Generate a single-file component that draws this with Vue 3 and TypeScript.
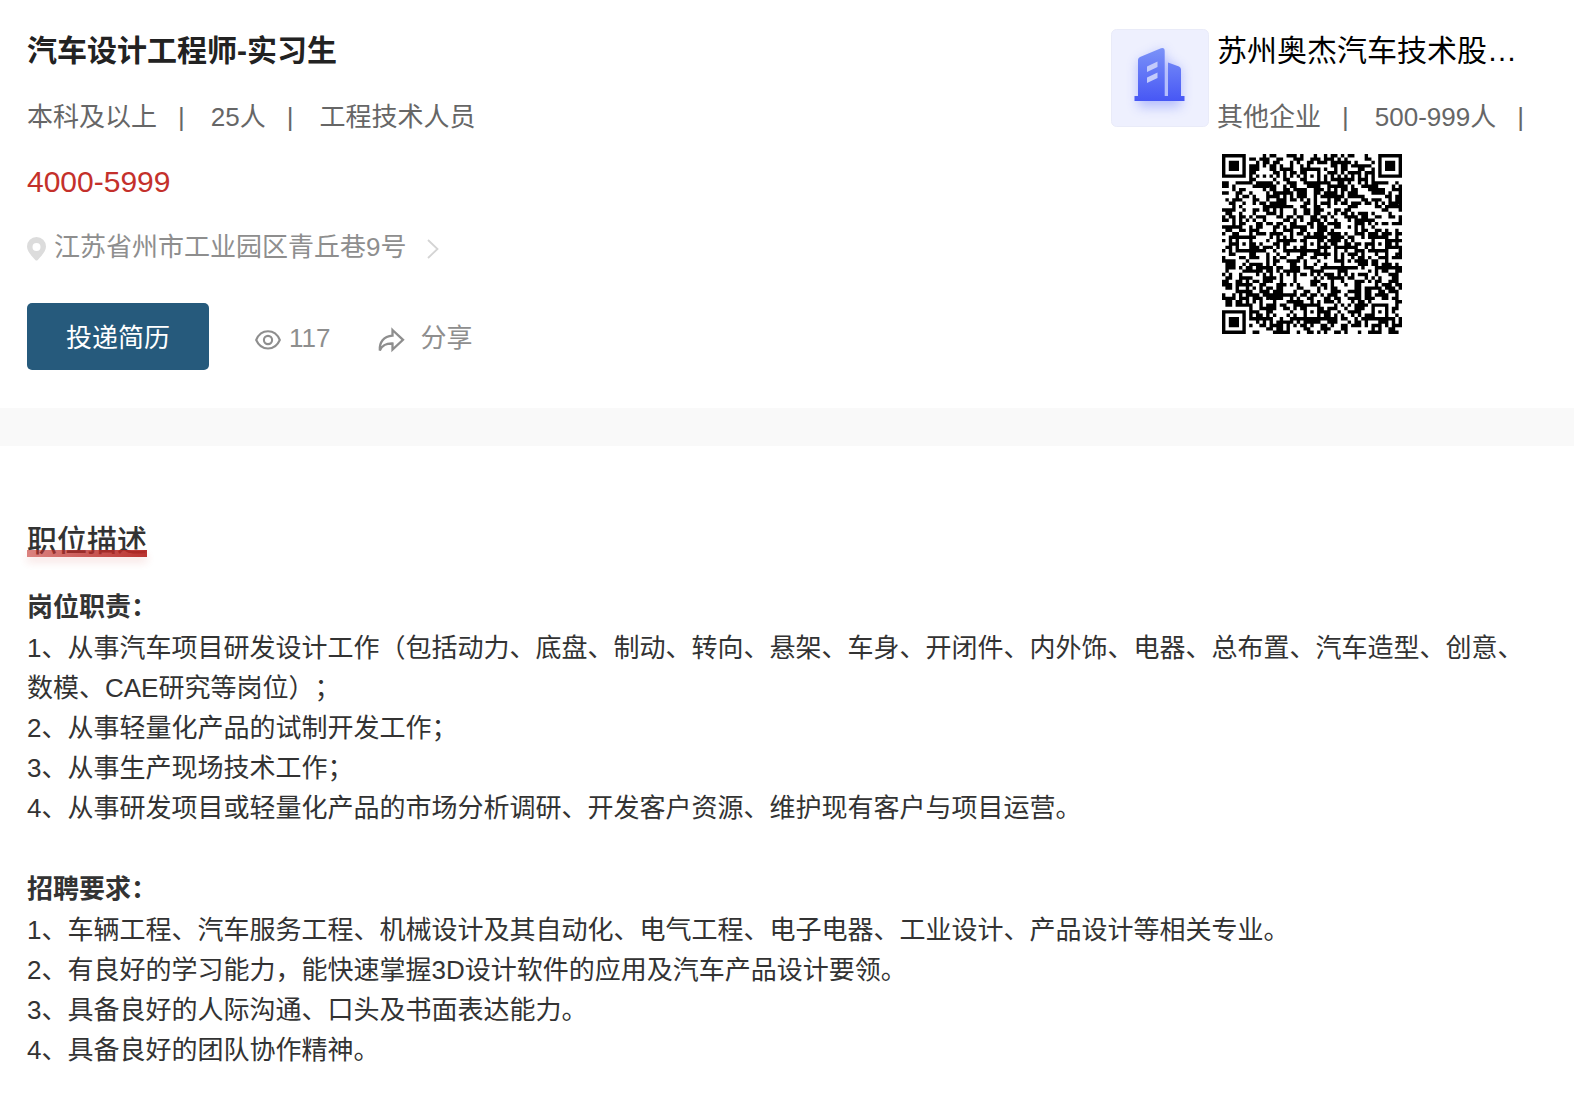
<script setup lang="ts">
interface Block {
  title: string
  items: string[]
}

const jobMeta: string[] = ['本科及以上', '25人', '工程技术人员']
const companyMeta: string[] = ['其他企业', '500-999人']

const blocks: Block[] = [
  {
    title: '岗位职责：',
    items: [
      '1、从事汽车项目研发设计工作（包括动力、底盘、制动、转向、悬架、车身、开闭件、内外饰、电器、总布置、汽车造型、创意、数模、CAE研究等岗位）；',
      '2、从事轻量化产品的试制开发工作；',
      '3、从事生产现场技术工作；',
      '4、从事研发项目或轻量化产品的市场分析调研、开发客户资源、维护现有客户与项目运营。',
    ],
  },
  {
    title: '招聘要求：',
    items: [
      '1、车辆工程、汽车服务工程、机械设计及其自动化、电气工程、电子电器、工业设计、产品设计等相关专业。',
      '2、有良好的学习能力，能快速掌握3D设计软件的应用及汽车产品设计要领。',
      '3、具备良好的人际沟通、口头及书面表达能力。',
      '4、具备良好的团队协作精神。',
    ],
  },
]

// Version 9 code: 53 modules per side
const QR_SIZE = 53
const ALIGN = [6, 26, 46]

function ring(dx: number, dy: number): number {
  return Math.max(Math.abs(dx), Math.abs(dy))
}

function buildQr(): string {
  let seed = 20239
  const next = (): number => {
    seed = (seed * 1103515245 + 12345) % 2147483648
    return seed / 2147483648
  }
  const last = QR_SIZE - 1
  let d = ''
  for (let y = 0; y < QR_SIZE; y++) {
    for (let x = 0; x < QR_SIZE; x++) {
      let dark = next() < 0.52
      if (x === 6 || y === 6) dark = (x + y) % 2 === 0
      for (const ay of ALIGN) {
        for (const ax of ALIGN) {
          const r = ring(x - ax, y - ay)
          if (r <= 2) dark = r !== 1
        }
      }
      for (const [fx, fy] of [[3, 3], [last - 3, 3], [3, last - 3]]) {
        const r = ring(x - fx, y - fy)
        if (r <= 4) dark = r !== 2 && r !== 4
      }
      if (dark) d += `M${x} ${y}h1v1h-1z`
    }
  }
  return d
}

const qrPath = buildQr()
</script>

<template>
  <main class="page">
    <header class="summary">
      <section class="job">
        <h1 class="job-title">汽车设计工程师-实习生</h1>
        <p class="meta">
          <template v-for="(m, i) in jobMeta" :key="m">
            <span>{{ m }}</span>
            <span v-if="i < jobMeta.length - 1" class="bar">|</span>
          </template>
        </p>
        <p class="salary">4000-5999</p>
        <a class="address" href="#map">
          <svg class="pin" viewBox="0 0 19 24" aria-hidden="true">
            <path fill="#dcdcdc" fill-rule="evenodd" d="M9.500 0A9.500 9.500 0 0 0 0 9.500C0 15 5.500 19.500 8.300 23Q9.500 24.200 10.700 23C13.500 19.500 19 15 19 9.500A9.500 9.500 0 0 0 9.500 0ZM9.500 6a4 4 0 1 1 0 8a4 4 0 0 1 0-8Z" />
          </svg>
          <span>江苏省州市工业园区青丘巷9号</span>
          <svg class="chevron" viewBox="0 0 12 20" aria-hidden="true">
            <path fill="none" stroke="#d4d4d4" stroke-width="1.800" d="M1 1l9.500 9L1 19" />
          </svg>
        </a>
        <div class="actions">
          <button class="apply" type="button">投递简历</button>
          <span class="views">
            <svg class="eye" viewBox="0 0 26 20" fill="none" stroke="#8e8e8e" stroke-width="2.100" aria-hidden="true">
              <path d="M1.200 10C3.500 4.500 7.800 1.300 13 1.300S22.500 4.500 24.800 10C22.500 15.300 18.200 18.500 13 18.500S3.500 15.300 1.200 10Z" />
              <circle cx="13" cy="10" r="4.100" />
            </svg>
            <span>117</span>
          </span>
          <button class="share" type="button">
            <svg class="share-icon" viewBox="0 0 27 26" fill="none" stroke="#8e8e8e" stroke-width="2.300" stroke-linejoin="miter" aria-hidden="true">
              <path d="M14.500 3L25 12.800L14.500 22.700V16.500C8.500 16.300 4.500 17.500 1.800 23.500C1.200 15.500 5.500 9.300 14.500 8.600Z" />
            </svg>
            <span>分享</span>
          </button>
        </div>
      </section>

      <aside class="company">
        <svg class="logo" viewBox="0 0 98 98" role="img" aria-label="企业">
          <defs>
            <linearGradient id="tower" x1="0" y1="0" x2="0" y2="1">
              <stop offset="0" stop-color="#7b92f8" />
              <stop offset="1" stop-color="#4757f5" />
            </linearGradient>
            <filter id="glow" x="-50%" y="-50%" width="200%" height="200%">
              <feGaussianBlur stdDeviation="6" />
            </filter>
          </defs>
          <rect x="0.500" y="0.500" width="97" height="97" rx="5" fill="#eef0fe" stroke="#e9ebf8" />
          <path d="M27 33L53 20V30L70 40V78H27Z" fill="#6f80fa" opacity="0.450" filter="url(#glow)" />
          <path fill="url(#tower)" d="M23.500 72V67H27V31Q27 29 29 28L50 19.300Q53.700 18.300 53.700 22V67H57V33.500L68 37.500Q70 38.300 70 40.500V67H73.500V72Z" />
          <path fill="#c3cbfb" d="M36 37.500L46.500 32.500V38L36 43ZM36 48.500L46.500 43.500V49L36 54Z" />
        </svg>
        <div class="company-info">
          <h2 class="company-name">苏州奥杰汽车技术股…</h2>
          <p class="meta">
            <template v-for="m in companyMeta" :key="m">
              <span>{{ m }}</span>
              <span class="bar">|</span>
            </template>
          </p>
          <svg class="qr" :viewBox="`0 0 ${QR_SIZE} ${QR_SIZE}`" role="img" aria-label="二维码">
            <path :d="qrPath" fill="#000" />
          </svg>
        </div>
      </aside>
    </header>

    <section class="detail">
      <h2 class="detail-title">职位描述</h2>
      <div v-for="b in blocks" :key="b.title" class="block">
        <h3 class="block-title">{{ b.title }}</h3>
        <p v-for="t in b.items" :key="t" class="line">{{ t }}</p>
      </div>
    </section>
  </main>
</template>

<style>
body {
  background: #fff;
}
</style>

<style scoped>
.page {
  font-family: "Liberation Sans", "Noto Sans CJK SC", sans-serif;
  font-size: 26px;
  line-height: 40px;
  color: #333;
  text-spacing-trim: space-all;
}

h1,
h2,
h3,
p {
  margin: 0;
}

button {
  font: inherit;
  border: 0;
  padding: 0;
  background: none;
  cursor: pointer;
}

.summary {
  display: flex;
  justify-content: space-between;
  padding: 29px 27px 38px;
  border-bottom: 38px solid #f9f9f9;
}

.job-title {
  font-size: 30px;
  line-height: 44px;
  font-weight: 600;
  color: #222;
}

.meta {
  display: flex;
  margin-top: 24px;
  color: #666;
  white-space: nowrap;
}

.bar {
  margin: 0 26px 0 21px;
}

.bar:last-child {
  margin-right: 0;
}

.salary {
  margin-top: 25px;
  font-size: 30px;
  color: #c4302b;
}

.address {
  display: flex;
  align-items: center;
  margin-top: 25px;
  color: #8e8e8e;
  text-decoration: none;
}

.pin {
  width: 19px;
  height: 24px;
  margin: 4px 8px 0 0;
}

.chevron {
  width: 12px;
  height: 20px;
  margin: 4px 0 0 21px;
}

.actions {
  display: flex;
  align-items: center;
  margin-top: 36px;
  color: #8e8e8e;
}

.apply {
  width: 182px;
  height: 67px;
  padding-top: 3px;
  border-radius: 5px;
  background: #265a7c;
  color: #fff;
}

.views,
.share {
  display: flex;
  align-items: center;
  margin-left: 46px;
  padding-top: 3px;
  color: #8e8e8e;
}

.share {
  margin-left: 48px;
}

.eye {
  width: 26px;
  height: 20px;
  margin: 4px 8px 0 0;
}

.share-icon {
  width: 27px;
  height: 26px;
  margin: 4px 15px 0 0;
}

.company {
  display: flex;
  gap: 8px;
  width: 436px;
}

.logo {
  flex: none;
  width: 98px;
  height: 98px;
}

.company-name {
  font-size: 30px;
  line-height: 44px;
  font-weight: 400;
  color: #000;
  white-space: nowrap;
}

.qr {
  display: block;
  width: 180px;
  height: 180px;
  margin: 17px 0 0 5px;
}

.detail {
  padding: 73px 27px 38px;
}

.detail-title {
  position: relative;
  width: max-content;
  font-size: 30px;
  line-height: 44px;
  font-weight: 500;
}

.detail-title::after {
  content: "";
  position: absolute;
  left: 0;
  right: 0;
  bottom: 6px;
  height: 7px;
  background: linear-gradient(90deg, rgba(196, 48, 43, 0.6), rgba(182, 40, 36, 0.95));
  box-shadow: 0 5px 8px rgba(196, 48, 43, 0.14);
}

.block {
  margin-top: 40px;
}

.detail-title + .block {
  margin-top: 23px;
}

.block-title {
  font-size: 26px;
  line-height: 42px;
  font-weight: 600;
}
</style>
